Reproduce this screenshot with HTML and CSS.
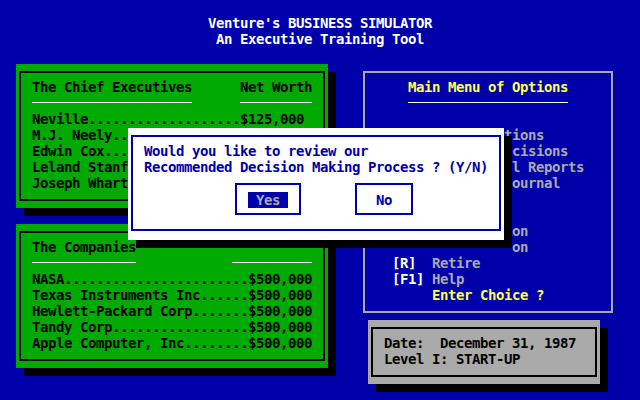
FILE: index.html
```html
<!DOCTYPE html>
<html>
<head>
<meta charset="utf-8">
<title>Venture's BUSINESS SIMULATOR</title>
<link rel="stylesheet" href="styles.css">
</head>
<body>
<div class="screen">
  <header class="title">
    <div class="row">Venture's BUSINESS SIMULATOR</div>
    <div class="row">An Executive Training Tool</div>
  </header>

  <section class="panel green execs">
    <div class="frame dark">
      <div class="row split"><span>The Chief Executives</span><span>Net Worth</span></div>
      <div class="row split rules"><i class="rule r-left"></i><i class="rule r-net"></i></div>
      <div class="row">Neville...................$125,000</div>
      <div class="row">M.J. Neely................$125,000</div>
      <div class="row">Edwin Cox.................$125,000</div>
      <div class="row">Leland Stanford...........$125,000</div>
      <div class="row">Joseph Wharton............$125,000</div>
    </div>
  </section>

  <section class="panel green companies">
    <div class="frame dark">
      <div class="row"><span>The Companies</span></div>
      <div class="row split rules"><i class="rule r-comp"></i><i class="rule r-worth"></i></div>
      <div class="row">NASA.......................$500,000</div>
      <div class="row">Texas Instruments Inc......$500,000</div>
      <div class="row">Hewlett-Packard Corp.......$500,000</div>
      <div class="row">Tandy Corp.................$500,000</div>
      <div class="row">Apple Computer, Inc........$500,000</div>
    </div>
  </section>

  <section class="panel menu">
    <div class="frame light">
      <div class="row center yellow">Main Menu of Options</div>
      <div class="row rules center-rules"><i class="rule r-menu"></i></div>
      <div class="row"></div>
      <div class="row item"><b>[V]</b>  <span>Review Options</span></div>
      <div class="row item"><b>[D]</b>  <span>Prepare Decisions</span></div>
      <div class="row item"><b>[P]</b>  <span>Operational Reports</span></div>
      <div class="row item"><b>[J]</b>  <span>Business Journal</span></div>
      <div class="row"></div>
      <div class="row"></div>
      <div class="row item"><b>[T]</b>  <span>Consultation</span></div>
      <div class="row item"><span>               on</span></div>
      <div class="row item"><b>[R]</b>  <span>Retire</span></div>
      <div class="row item"><b>[F1]</b> <span>Help</span></div>
      <div class="row item yellow">     Enter Choice ?</div>
    </div>
  </section>

  <section class="panel status">
    <div class="frame dark">
      <div class="row">Date:  December 31, 1987</div>
      <div class="row">Level I: START-UP</div>
    </div>
  </section>

  <section class="panel dialog">
    <div class="frame blue">
      <div class="row">Would you like to review our</div>
      <div class="row">Recommended Decision Making Process ? (Y/N)</div>
      <div class="buttons">
        <div class="btn yes"><span class="hl"> Yes </span></div>
        <div class="btn no"><span>No</span></div>
      </div>
    </div>
  </section>
</div>
</body>
</html>
```
FILE: styles.css
```css
html, body {
  margin: 0;
  padding: 0;
  background: #0000aa;
}

.screen {
  width: 640px;
  height: 400px;
  background: #0000aa;
  display: grid;
  grid-template-columns: repeat(80, 8px);
  grid-template-rows: repeat(25, 16px);
  font-family: "DejaVu Sans Mono", "Liberation Mono", monospace;
  font-weight: bold;
  font-size: 14px;
  letter-spacing: -0.43px;
  line-height: 16px;
  overflow: hidden;
}

.title {
  grid-column: 1 / -1;
  grid-row: 2 / 4;
  text-align: center;
  color: #ffffff;
  margin-top: -1px;
}

.panel {
  box-sizing: border-box;
  display: flex;
  padding: 7px 3px;
}

.frame {
  flex: 1;
  border: 2px solid #000;
  padding: 6px 11px 0 11px;
}
.frame.dark { border-color: #000; }
.frame.light { border-color: #aaaaaa; padding-left: 27px; padding-right: 0; }
.frame.blue { border-color: #0000aa; }

.row { height: 16px; white-space: pre; }
.split { display: flex; justify-content: space-between; }

.rules { display: flex; align-items: flex-start; }
.rule {
  display: block;
  height: 1px;
  margin-top: 7px;
  background: #ffffff;
}
.r-left { width: 160px; }
.r-net { width: 72px; }
.r-comp { width: 104px; }
.r-worth { width: 80px; }
.r-menu { width: 160px; }
.center-rules { justify-content: center; margin-left: -27px; }

.green { background: #00aa00; color: #000; box-shadow: 8px 8px 0 #000; }
.execs { grid-column: 3 / 42; grid-row: 5 / 14; }
.companies { grid-column: 3 / 42; grid-row: 15 / 24; }

.menu {
  grid-column: 46 / 78;
  grid-row: 5 / 21;
  color: #aaaaaa;
}
.center { text-align: center; margin-left: -27px; }
.yellow { color: #ffff55; }
.item b { color: #ffffff; font-weight: bold; }
.item span { color: #aaaaaa; }
.item.yellow { color: #ffff55; }

.status {
  grid-column: 47 / 76;
  grid-row: 21 / 25;
  background: #aaaaaa;
  color: #000;
  box-shadow: 8px 8px 0 #000;
}

.dialog {
  grid-column: 17 / 64;
  grid-row: 9 / 16;
  background: #ffffff;
  color: #0000aa;
  box-shadow: 8px 8px 0 #000;
  padding: 7px 3px 9px;
  z-index: 2;
}

.buttons {
  display: flex;
  gap: 54px;
  margin-top: 8px;
  padding-left: 91px;
}
.btn {
  border: 2px solid #0000aa;
  padding: 7px 11px 5px;
  height: 16px;
}
.btn span { display: block; height: 16px; white-space: pre; }
.no { padding-left: 19px; padding-right: 19px; }
.hl { background: #0000aa; color: #aaaaaa; width: 40px; }
```
